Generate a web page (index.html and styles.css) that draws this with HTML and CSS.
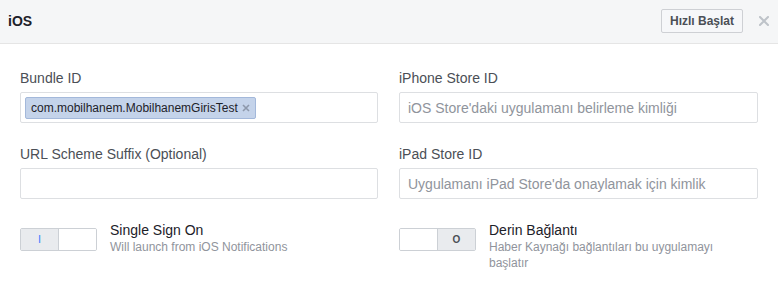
FILE: index.html
```html
<!DOCTYPE html>
<html lang="tr">
<head>
<meta charset="utf-8">
<title>iOS</title>
<link rel="stylesheet" href="styles.css">
</head>
<body>
<div class="panel">
  <div class="header">
    <div class="title">iOS</div>
    <button class="quick">Hızlı Başlat</button>
    <span class="close" aria-label="Kapat">
      <svg width="10" height="10" viewBox="0 0 10 10"><path d="M1 1L9 9M9 1L1 9" stroke="#bec3c9" stroke-width="2" stroke-linecap="square"/></svg>
    </span>
  </div>
  <div class="body">
    <div class="grid">
      <div class="field">
        <div class="label">Bundle ID</div>
        <div class="input tokens">
          <span class="token">com.mobilhanem.MobilhanemGirisTest<span class="token-x">
            <svg width="8" height="8" viewBox="0 0 8 8"><path d="M1 1L7 7M7 1L1 7" stroke="#8d98ab" stroke-width="1.6"/></svg>
          </span></span>
        </div>
      </div>
      <div class="field">
        <div class="label">iPhone Store ID</div>
        <div class="input"><span class="placeholder">iOS Store'daki uygulamanı belirleme kimliği</span></div>
      </div>
      <div class="field">
        <div class="label">URL Scheme Suffix (Optional)</div>
        <div class="input"></div>
      </div>
      <div class="field">
        <div class="label">iPad Store ID</div>
        <div class="input"><span class="placeholder">Uygulamanı iPad Store'da onaylamak için kimlik</span></div>
      </div>
      <div class="switch-row">
        <div class="toggle">
          <span class="half on-active"><span class="on-mark">I</span></span>
          <span class="half"></span>
        </div>
        <div class="switch-text">
          <div class="switch-title">Single Sign On</div>
          <div class="switch-sub">Will launch from iOS Notifications</div>
        </div>
      </div>
      <div class="switch-row">
        <div class="toggle">
          <span class="half"></span>
          <span class="half off-active"><span class="off-mark">O</span></span>
        </div>
        <div class="switch-text narrow">
          <div class="switch-title">Derin Bağlantı</div>
          <div class="switch-sub">Haber Kaynağı bağlantıları bu uygulamayı başlatır</div>
        </div>
      </div>
    </div>
  </div>
</div>
</body>
</html>
```
FILE: styles.css
```css
* { box-sizing: border-box; }
html, body {
  margin: 0;
  padding: 0;
  background: #fff;
  font-family: "Liberation Sans", Arial, Helvetica, sans-serif;
  color: #1d2129;
}
.panel {
  width: 778px;
  height: 292px;
  background: #fff;
}
.header {
  height: 44px;
  background: #f5f6f7;
  border-bottom: 1px solid #e5e5e5;
  display: flex;
  align-items: center;
  padding: 0 9px 1px 8px;
}
.title {
  flex: 1;
  font-size: 14px;
  font-weight: bold;
  color: #1d2129;
  line-height: 18px;
}
.quick {
  height: 24px;
  padding: 0 8px;
  background: #f6f7f9;
  border: 1px solid #ced0d4;
  border-radius: 2px;
  font-family: inherit;
  font-size: 12px;
  font-weight: bold;
  color: #4b4f56;
  line-height: 22px;
}
.close {
  display: flex;
  margin-left: 16px;
  width: 10px;
  height: 10px;
}
.body {
  padding: 25px 20px 0 20px;
}
.grid {
  display: grid;
  grid-template-columns: 358px 359px;
  column-gap: 21px;
  row-gap: 22px;
}
.label {
  font-size: 14px;
  line-height: 18px;
  color: #4b4f56;
  margin-bottom: 5px;
}
.input {
  height: 31px;
  border: 1px solid #dddfe2;
  border-radius: 2px;
  padding: 0 8px;
  display: flex;
  align-items: center;
  font-size: 14px;
  background: #fff;
}
.placeholder {
  color: #90949c;
}
.tokens {
  padding: 0 4px;
}
.token {
  display: inline-flex;
  align-items: center;
  height: 22px;
  padding: 0 5px;
  background: #c4d3ea;
  border: 1px solid #a3b8da;
  border-radius: 2px;
  font-size: 12px;
  color: #1d2129;
  margin-top: 1px;
}
.token-x {
  display: inline-flex;
  margin-left: 4px;
}
.switch-row {
  display: flex;
  align-items: flex-start;
}
.toggle {
  display: flex;
  width: 77px;
  height: 23px;
  margin-top: 7px;
  border: 1px solid #ccd0d5;
  border-radius: 2px;
  overflow: hidden;
  flex: none;
}
.half {
  flex: 1;
  display: flex;
  align-items: center;
  justify-content: center;
  background: #fff;
}
.on-active {
  background: #e9ebee;
  border-right: 1px solid #ccd0d5;
}
.off-active {
  background: #e9ebee;
  border-left: 1px solid #ccd0d5;
}
.on-mark {
  color: #4080ff;
  font-size: 11px;
  line-height: 11px;
}
.off-mark {
  color: #4b4f56;
  font-size: 10px;
  font-weight: bold;
  line-height: 10px;
}
.switch-text {
  margin-left: 13px;
}
.narrow {
  width: 250px;
}
.switch-title {
  font-size: 14px;
  line-height: 18px;
  color: #1d2129;
}
.switch-sub {
  font-size: 12px;
  line-height: 16px;
  color: #90949c;
}
```
